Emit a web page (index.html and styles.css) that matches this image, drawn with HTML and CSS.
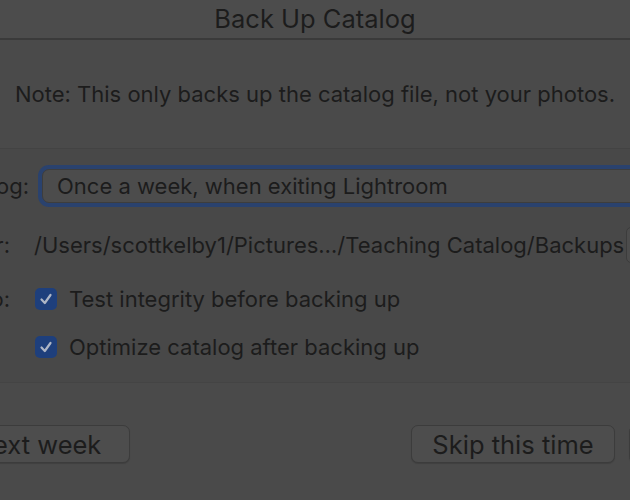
FILE: index.html
```html
<!DOCTYPE html>
<html>
<head>
<meta charset="utf-8">
<link rel="stylesheet" href="styles.css">
</head>
<body>
<div class="dialog">
  <div class="titlebar">Back Up Catalog</div>
  <div class="note">Note: This only backs up the catalog file, not your photos.</div>
  <div class="options">
    <div class="label label-first">Back up catalog:</div>
    <div class="cell">
      <div class="popup-ring"><div class="popup">Once a week, when exiting Lightroom</div></div>
    </div>
    <div class="label">Backup Folder:</div>
    <div class="cell">
      <span class="path">/Users/scottkelby1/Pictures…/Teaching Catalog/Backups</span>
      <span class="choose">Choose…</span>
    </div>
    <div class="label">Also:</div>
    <div class="cell">
      <span class="checkbox"><svg viewBox="0 0 22 22" width="22" height="22"><path d="M6.5 11.5 L9.8 15 L15.5 7" fill="none" stroke="#aeb6c6" stroke-width="2.2" stroke-linecap="round" stroke-linejoin="round"/></svg></span>
      <span class="check-text">Test integrity before backing up</span>
    </div>
    <div class="label"></div>
    <div class="cell">
      <span class="checkbox"><svg viewBox="0 0 22 22" width="22" height="22"><path d="M6.5 11.5 L9.8 15 L15.5 7" fill="none" stroke="#aeb6c6" stroke-width="2.2" stroke-linecap="round" stroke-linejoin="round"/></svg></span>
      <span class="check-text">Optimize catalog after backing up</span>
    </div>
  </div>
  <div class="buttons">
    <button class="btn btn-left">Skip until next week</button>
    <button class="btn btn-skip">Skip this time</button>
    <button class="btn">Back Up</button>
  </div>
</div>
</body>
</html>
```
FILE: styles.css
```css
html, body {
  margin: 0;
  padding: 0;
  background: #4a4a4a;
  overflow: hidden;
}
body {
  width: 630px;
  height: 500px;
  font-family: "Inter", "Liberation Sans", sans-serif;
  color: #1c1c1c;
}
.dialog {
  width: 630px;
}
.titlebar {
  height: 38px;
  line-height: 38px;
  text-align: center;
  font-size: 25.5px;
  background: #4c4c4c;
  border-bottom: 2px solid #3a3a3a;
  white-space: nowrap;
}
.note {
  height: 108px;
  display: flex;
  align-items: center;
  justify-content: center;
  font-size: 22px;
  white-space: nowrap;
  border-bottom: 1px solid #434343;
}
.options {
  display: grid;
  grid-template-columns: 201px 1fr;
  grid-template-rows: 58px 60px 48px 48px;
  column-gap: 3px;
  margin-left: -170px;
  width: 1100px;
  padding: 8px 0 11px;
  background: #484848;
  border-bottom: 1px solid #444444;
  font-size: 22px;
}
.label {
  display: flex;
  align-items: center;
  justify-content: flex-end;
  padding-right: 21px;
  white-space: nowrap;
}
.label-first {
  padding-right: 2px;
}
.cell {
  display: flex;
  align-items: center;
  white-space: nowrap;
}
.popup-ring {
  margin-left: 4px;
  padding: 4px;
  border-radius: 11px;
  background: #2a426e;
  width: 640px;
}
.popup {
  height: 32px;
  line-height: 32px;
  padding-left: 14px;
  border-radius: 7px;
  background: #4c4c4c;
  border: 1px solid #3d3d3d;
}
.choose {
  margin-left: 2px;
  padding: 4px 10px;
  border: 1px solid #3c3c3c;
  border-radius: 5px;
  background: #4c4c4c;
}
.checkbox {
  width: 22px;
  height: 22px;
  margin-left: 1px;
  border-radius: 5px;
  background: #1e3f7c;
  display: flex;
}
.check-text {
  margin-left: 12px;
}
.buttons {
  display: flex;
  padding-top: 42px;
  height: 38px;
  margin-left: -168px;
  width: 1100px;
}
.btn {
  height: 38px;
  box-sizing: border-box;
  font-family: inherit;
  font-size: 25.5px;
  color: #1c1c1c;
  background: #4d4d4d;
  border: 1px solid #3c3c3c;
  border-radius: 7px;
  padding: 0 19px;
  white-space: nowrap;
  box-shadow: 0 1px 1px rgba(0,0,0,0.15);
}
.btn-left {
  width: 298px;
}
.btn-skip {
  margin-left: 281px;
  width: 204px;
}
.btn + .btn + .btn {
  margin-left: 14px;
}
```
